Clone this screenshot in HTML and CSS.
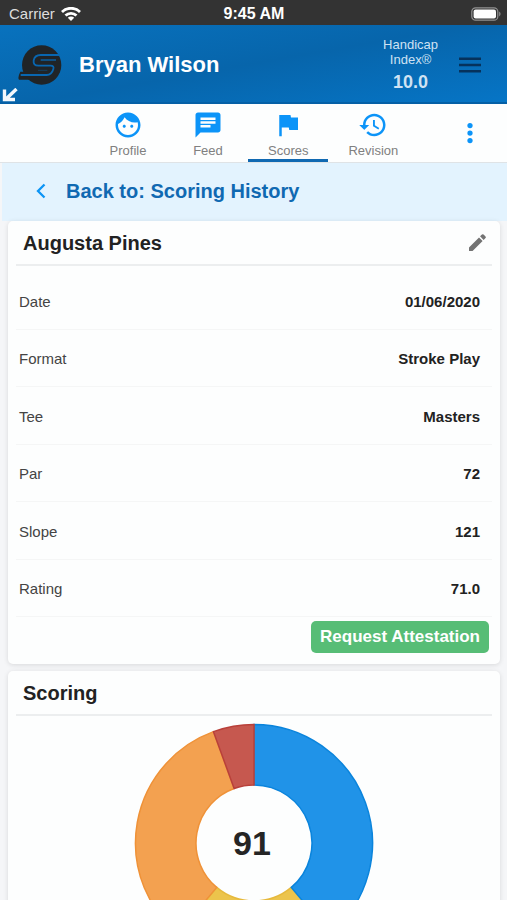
FILE: index.html
```html
<!DOCTYPE html>
<html lang="en">
<head>
<meta charset="utf-8">
<meta name="viewport" content="width=device-width, initial-scale=1">
<title>Scoring History</title>
<link rel="stylesheet" href="styles.css">
</head>
<body>
<div class="status">
  <div class="status-left">Carrier
    <svg class="wifi" viewBox="0 0 20 14" aria-hidden="true"><g fill="none" stroke="#fff" stroke-width="2.8"><path d="M1 5a12.700 12.700 0 0 1 18 0"/><path d="M4.500 8.600a7.800 7.800 0 0 1 11 0"/></g><path d="M10 14l-3.200-3.300a4.600 4.600 0 0 1 6.400 0z" fill="#fff"/></svg>
  </div>
  <div class="status-time">9:45 AM</div>
  <div class="status-right">
    <svg class="battery" viewBox="0 0 30 14" aria-hidden="true"><rect x=".8" y=".8" width="26" height="12.4" rx="3.8" fill="none" stroke="#929292" stroke-width="1.2"/><rect x="2.6" y="2.6" width="22.4" height="8.8" rx="2" fill="#fff"/><path d="M28.2 4.6v4.8c1.8-1 1.8-3.8 0-4.8z" fill="#929292"/></svg>
  </div>
</div>
<header class="header">
  <svg class="logo" viewBox="0 0 132 120" aria-hidden="true">
    <circle cx="71" cy="60" r="59" fill="#202427"/>
    <path d="M7 80H90l22-10-6 30-14 4H3q-5-6 4-24z" fill="#202427"/>
    <path d="M124 30H68q-18 0-21 16-2 16 14 16h37q11 0 8 10-5 18-20 18H8" fill="none" stroke="#0866b0" stroke-width="5.500"/>
    <path d="M114 45H68" fill="none" stroke="#0866b0" stroke-width="4"/>
    <path d="M60 76H88" fill="none" stroke="#0866b0" stroke-opacity=".4" stroke-width="3"/>
  </svg>
  <h1 class="name">Bryan Wilson</h1>
  <div class="handicap"><span>Handicap</span><span>Index®</span><strong>10.0</strong></div>
  <button class="icon-button" aria-label="Menu">
    <svg class="menu" viewBox="0 0 24 16" aria-hidden="true"><path d="M1 1.7h22M1 8h22M1 14.3h22" stroke="#06325c" stroke-width="2.4"/></svg>
  </button>
  <svg class="corner" viewBox="0 0 16 14" aria-hidden="true"><path d="M14.5 1L4 11M2.500 1.500V11.500H13" fill="none" stroke="#f4f8fc" stroke-width="3.400"/></svg>
</header>
<nav class="tabs">
  <a class="tab" href="#profile"><svg viewBox="0 0 24 24" aria-hidden="true"><path d="M9 11.75c-.69 0-1.25.56-1.25 1.25s.56 1.25 1.25 1.25 1.25-.56 1.25-1.25-.56-1.25-1.25-1.25zm6 0c-.69 0-1.25.56-1.25 1.25s.56 1.25 1.25 1.25 1.25-.56 1.25-1.25-.56-1.25-1.25-1.25zM12 2C6.48 2 2 6.48 2 12s4.48 10 10 10 10-4.48 10-10S17.52 2 12 2zm0 18c-4.41 0-8-3.59-8-8 0-.29.02-.58.05-.86 2.36-1.05 4.23-2.98 5.21-5.37C11.07 8.33 14.05 10 17.42 10c.78 0 1.53-.09 2.25-.26.21.71.33 1.47.33 2.26 0 4.41-3.59 8-8 8z"/></svg>Profile</a>
  <a class="tab" href="#feed"><svg viewBox="0 0 24 24" aria-hidden="true"><path d="M20 2H4c-1.1 0-1.99.9-1.99 2L2 22l4-4h14c1.1 0 2-.9 2-2V4c0-1.1-.9-2-2-2zM6 9h12v2H6V9zm8 5H6v-2h8v2zm4-6H6V6h12v2z"/></svg>Feed</a>
  <a class="tab tab-active" href="#scores" aria-current="page"><svg viewBox="0 0 24 24" aria-hidden="true"><path d="M14.4 6L14 4H5v17h2v-7h5.6l.4 2h7V6z"/></svg>Scores</a>
  <a class="tab" href="#revision"><svg viewBox="0 0 24 24" aria-hidden="true"><path d="M13 3c-4.97 0-9 4.03-9 9H1l3.89 3.89.07.14L9 12H6c0-3.87 3.13-7 7-7s7 3.13 7 7-3.13 7-7 7c-1.93 0-3.68-.79-4.94-2.06l-1.42 1.42C8.27 19.99 10.51 21 13 21c4.97 0 9-4.03 9-9s-4.03-9-9-9zm-1 5v5l4.28 2.54.72-1.21-3.5-2.08V8H12z"/></svg>Revision</a>
  <button class="icon-button more" aria-label="More">
    <svg viewBox="0 0 24 24" aria-hidden="true"><circle cx="12" cy="6" r="2.1"/><circle cx="12" cy="12" r="2.1"/><circle cx="12" cy="18" r="2.1"/></svg>
  </button>
</nav>
<a class="back" href="#history"><svg viewBox="0 0 10 16" aria-hidden="true"><path d="M8.5 1.5L2 8l6.500 6.500" fill="none" stroke="#0c94f5" stroke-width="2.300"/></svg>Back to: Scoring History</a>
<main class="content">
  <section class="card">
    <div class="card-head">
      <h2>Augusta Pines</h2>
      <button class="icon-button" aria-label="Edit"><svg class="pencil" viewBox="0 0 18 18" aria-hidden="true"><path d="M0 14.200V18h3.800L14.400 7.400l-3.800-3.800zM17.500 4.300a1.300 1.300 0 0 0 0-1.700L15.400.5a1.300 1.300 0 0 0-1.700 0L11.700 2.500l3.800 3.800z" fill="#737373"/></svg></button>
    </div>
    <dl class="details">
      <div><dt>Date</dt><dd>01/06/2020</dd></div>
      <div><dt>Format</dt><dd>Stroke Play</dd></div>
      <div><dt>Tee</dt><dd>Masters</dd></div>
      <div><dt>Par</dt><dd>72</dd></div>
      <div><dt>Slope</dt><dd>121</dd></div>
      <div><dt>Rating</dt><dd>71.0</dd></div>
    </dl>
    <div class="actions"><button class="attest">Request Attestation</button></div>
  </section>
  <section class="card">
    <div class="card-head"><h2>Scoring</h2></div>
    <svg class="donut" viewBox="-120 -120 240 240" role="img" aria-label="Scoring breakdown, total 91">
      <g stroke-width="1.500">
        <path d="M37.280 44.430A58 58 0 0 1-37.280 44.430L-76.170 90.780A118.500 118.500 0 0 0 76.170 90.780Z" fill="#ecc44c" stroke="#e6b93c"/>
        <path d="M-37.280 44.430A58 58 0 0 1-19.840-54.500L-40.530-111.350A118.500 118.500 0 0 0-76.170 90.780Z" fill="#f3a150" stroke="#ef9238"/>
        <path d="M0-58A58 58 0 0 1 37.280 44.430L76.170 90.780A118.500 118.500 0 0 0 0-118.500Z" fill="#2093e8" stroke="#0a84dc"/>
        <path d="M-19.840-54.500A58 58 0 0 1 0-58V-118.500A118.500 118.500 0 0 0-40.530-111.350Z" fill="#c6584f" stroke="#b9403a"/>
      </g>
      <text class="total" x="-2" y="12" text-anchor="middle">91</text>
    </svg>
  </section>
</main>
</body>
</html>
```
FILE: styles.css
```css
* { box-sizing: border-box; }
html { scrollbar-width: none; }
body {
  margin: 0;
  background: #f5f6f8;
  color: #222;
  font-family: "Liberation Sans", Arial, sans-serif;
  font-size: 15px;
}
h1, h2, dl, dd { margin: 0; }
a { text-decoration: none; }
svg { display: block; flex: none; }
button { font-family: inherit; border: 0; cursor: pointer; }
.icon-button { padding: 0; background: none; }

.status {
  display: grid;
  grid-template-columns: 1fr auto 1fr;
  align-items: center;
  height: 25px;
  padding: 2px 6px 0 9px;
  background: #333;
  color: #fff;
}
.status-left { display: flex; align-items: center; gap: 6px; color: #ddd; }
.status-time { padding-right: 2px; font-size: 16px; font-weight: bold; }
.status-right { display: flex; justify-content: flex-end; }
.wifi { width: 20px; height: 14px; }
.battery { width: 30px; height: 14px; }

.header {
  position: relative;
  display: flex;
  align-items: center;
  height: 79px;
  padding: 2px 25px 0 18px;
  background: linear-gradient(170deg, #0872be, #0765ab 50%, #0675c6);
  border-bottom: 2px solid #0560a6;
  color: #fff;
}
.logo { width: 44px; height: 40px; }
.name { margin-left: 17px; font-size: 22px; line-height: 28px; }
.handicap {
  display: flex;
  flex-direction: column;
  align-items: center;
  margin: 0 20px 0 auto;
  color: #cfe2f3;
  font-size: 13px;
  line-height: 15px;
}
.handicap strong { margin-top: 4px; font-size: 18px; line-height: 22px; }
.menu { width: 24px; height: 16px; }
.corner { position: absolute; left: 2px; bottom: 0; width: 16px; height: 14px; }

.tabs {
  display: flex;
  height: 59px;
  padding: 0 22px 0 88px;
  background: #fdfefe;
  border-bottom: 1px solid #dfe3e6;
}
.tab {
  display: flex;
  flex-direction: column;
  align-items: center;
  min-width: 80px;
  padding: 6px 20px 0;
  border-bottom: 3px solid transparent;
  color: #808080;
  font-size: 13px;
  line-height: 20px;
}
.tab-active { border-color: #1069b2; }
.tab svg, .more svg { width: 30px; height: 30px; fill: #0c94f8; }
.tab svg { margin-bottom: 1px; }
.more { margin-left: auto; }

.back {
  display: flex;
  align-items: center;
  gap: 20px;
  height: 58px;
  margin-left: 2px;
  padding: 0 34px 2px;
  background: #e3f3fe;
  color: #1069b2;
  font-size: 20px;
  font-weight: bold;
}
.back svg { width: 10px; height: 16px; }

.content { display: grid; gap: 7px; padding: 0 7px 8px 8px; }
.card {
  padding: 0 8px;
  background: #fdfefe;
  border-radius: 5px;
  box-shadow: 0 1px 5px rgba(0, 0, 0, .12);
}
.card-head {
  display: flex;
  align-items: center;
  justify-content: space-between;
  height: 45px;
  padding: 0 6px 0 7px;
  border-bottom: 2px solid #eceeef;
}
.card-head h2 { font-size: 20px; line-height: 24px; }
.pencil { width: 17px; height: 17px; }
.details {
  display: grid;
  grid-template-rows: repeat(6, 1fr);
  height: 351px;
  padding-top: 6px;
}
.details div {
  display: flex;
  align-items: center;
  justify-content: space-between;
  padding: 2px 12px 0 3px;
  border-bottom: 1px solid #f5f6f6;
}
.details dt { color: #444; }
.details dd { font-weight: bold; }
.actions { display: flex; justify-content: flex-end; padding: 4px 3px 11px; }
.attest {
  height: 32px;
  padding: 0 9px;
  border-radius: 5px;
  background: #57bd76;
  color: #fff;
  font-size: 17px;
  font-weight: bold;
}
.donut { width: 240px; height: 240px; margin: 7px auto 16px; }
.total { fill: #252525; font-size: 34px; font-weight: bold; }
```
